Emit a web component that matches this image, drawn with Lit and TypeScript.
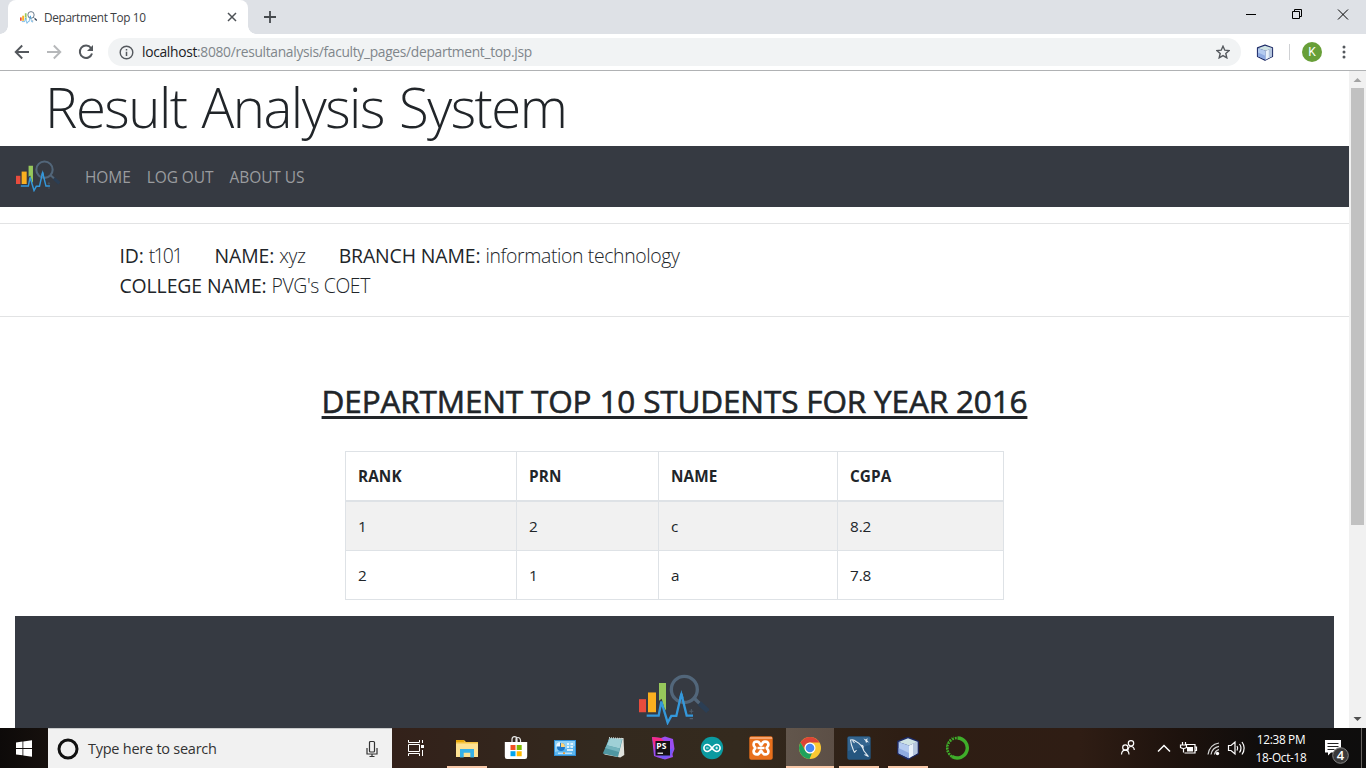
import { LitElement, html, css, svg } from "lit";
import { customElement } from "lit/decorators.js";

const logo = (cls: string) => html`<svg class=${cls} viewBox="57 42 210 152" preserveAspectRatio="none">
  <rect x="57" y="117" width="21" height="39" fill="#e84c3d"/>
  <rect x="84" y="97" width="24" height="59" fill="#fbb01f"/>
  <path d="M117 69h21v82l-5-8-8-27-8 6z" fill="#97c85b"/>
  <circle cx="193" cy="88" r="39" fill="none" stroke="#52667a" stroke-width="10"/>
  <path d="M221 113l18 17" stroke="#52667a" stroke-width="10"/>
  <path d="M238 129l26 24" stroke="#2b3e54" stroke-width="15"/>
  <path d="M80 166h36l8-42 19 63 11-20h15l15-66 16 65h19" fill="none" stroke="#3498db" stroke-width="7"/>
  <path d="M184 90l-6 24h13z" fill="#3498db"/>
  <path d="M214 146v14M208 153h12M209 175h10" stroke="#50606f" stroke-width="3"/>
</svg>`;

const cube = svg`<path d="M12 1.500l10 4v12l-10 5.500-10-5.500v-12z" fill="#1d2a66" stroke="#1d2a66" stroke-width="1.600" stroke-linejoin="round"/>
  <path d="M12 2.300l9.400 3.500-8.400 3.800-10.400-3.600z" fill="#cfe3e4"/>
  <path d="M2.600 6l10.400 3.600v12.600l-10.400-5z" fill="#b4cbf0"/>
  <path d="M2.600 12l10.400 5v5.200l-10.400-5z" fill="#8fabe2"/>
  <path d="M13 9.600l8.400-3.800v11.400l-8.400 5z" fill="#eaf2fa"/>
  <path d="M17 7.800l4.400-2v11.400l-4.400 2.600z" fill="#b5c6de"/>`;

const apps = [
  { name: "explorer", open: true, art: svg`<path d="M1 4h8l2 2h12v15H1z" fill="#f5c342"/><path d="M1 4h8v2H1z" fill="#e8a80c"/><path d="M1 7.500h22V21H1z" fill="#fde293"/><path d="M5 13h14v8.500h-3.700v-4.700H8.700v4.700H5z" fill="#35b1e8"/>` },
  { name: "store", art: svg`<path d="M8 6V3.500Q8 .7 10.500.7T13 3.500V6M12 6V3.500Q12 1.500 14 1.500T16.500 4V6" fill="none" stroke="#e8e8e8" stroke-width="1.200"/><path d="M.8 6h22.400v14.500Q23.200 23 21 23H3Q.8 23 .8 20.500z" fill="#fff"/><path d="M6.500 9h5v5h-5z" fill="#f25022"/><path d="M12.700 9h5v5h-5z" fill="#7fba00"/><path d="M6.500 15.200h5v5h-5z" fill="#00a4ef"/><path d="M12.700 15.200h5v5h-5z" fill="#ffb900"/>` },
  { name: "control", art: svg`<rect x="1.500" y="4.500" width="21" height="15" fill="#5bb5ee" stroke="#2f8fd6"/><path d="M2 5h20v5L2 16z" fill="#8dd0f7"/><circle cx="8" cy="11" r="4" fill="#1e78c8"/><path d="M8 11V7a4 4 0 0 1 4 4z" fill="#ffd479"/><path d="M7 10.500V6.300a4 4 0 0 0-3.800 4.200z" fill="#eaf6ff"/><path d="M14 8h2m1.500 0H20M14 11h2m1.500 0H20M14 14h6" stroke="#fff" stroke-width="1.400"/><path d="M5 17.200h14" stroke="#e8f6ff"/><path d="M10 17.200h2" stroke="#e69b3c" stroke-width="1.800"/>` },
  { name: "notepad", art: svg`<path d="M7 2.500L21.500 2 22.300 19l-4 2.500-16-3z" fill="#dfe2dc"/><path d="M7.500 2L20.500 3l-4.500 18L.8 17.500z" fill="#4f97a2"/><path d="M7.800 2.300L20 3.300l-2.300 9.200L4.700 9.300z" fill="#9fd0d6"/><path d="M4.700 9.300l13 3.200-.8 3.500L3.200 12z" fill="#74b4bd"/><path d="M7 1.800l14 .9" stroke="#c8d2d2" stroke-width="1.500" stroke-dasharray="1 1"/>` },
  { name: "phpstorm", art: svg`<path d="M1 1l9 1 4-1.500L22 3l1.500 10-2 5 .5 3-8 2.500-7-2L3 20z" fill="#9a4df0"/><path d="M1 1l9 1 3 3-8 1-1 9z" fill="#f62a86"/><path d="M22 12l-2 8-8 3-4-4z" fill="#6f5cf6"/><rect x="4.500" y="5" width="14.500" height="14.500" fill="#151116"/><text class="ps" x="5.300" y="13">PS</text><path d="M6.500 17.200h5.500" stroke="#fff" stroke-width="1.200"/>` },
  { name: "arduino", art: svg`<circle cx="12" cy="12" r="11.200" fill="#0b9aa0"/><path d="M12 12c-1.800-2.400-3-3.500-4.700-3.500a3.400 3.500 0 0 0 0 7c1.700 0 2.900-1.100 4.700-3.500s3-3.500 4.700-3.500a3.400 3.500 0 0 1 0 7c-1.700 0-2.900-1.100-4.700-3.500z" fill="none" stroke="#fff" stroke-width="1.600"/><path d="M6 12h2.600M15.400 12H18M16.700 10.700v2.600" stroke="#fff" stroke-width=".9"/>` },
  { name: "xampp", art: svg`<rect x=".3" y=".3" width="23.400" height="23.400" rx="2" fill="#e8701c"/><path d="M1 1h22v2H1z" fill="#f5a470"/><path d="M12 9.300C11 9.300 11.200 5.600 8 5.600S4.600 7 4.600 8.700 6.300 11 6.300 12 4.600 13.600 4.600 15.300 5 18.400 8 18.400 11 14.700 12 14.700 12.800 18.400 16 18.400s3.400-1.400 3.400-3.100S17.700 13 17.700 12s1.700-1.600 1.700-3.300S19 5.600 16 5.600 13 9.300 12 9.300z" fill="none" stroke="#fff" stroke-width="2.700"/><path d="M8.500 12h7" stroke="#fff" stroke-width="2.400"/>` },
  { name: "chrome", open: true, active: true, art: svg`<circle cx="12" cy="12" r="11" fill="#fbc933"/><path d="M2.500 6.500A11 11 0 0 1 21.500 6.500H12A5.500 5.500 0 0 0 7 14.500z" fill="#dc4437"/><path d="M2.500 6.500L7.300 14.700A5.500 5.500 0 0 0 14 17L11.500 23A11 11 0 0 1 2.500 6.500z" fill="#1fa15d"/><circle cx="12" cy="12" r="5.500" fill="#fff"/><circle cx="12" cy="12" r="4.300" fill="#4787f3"/>` },
  { name: "workbench", open: true, art: svg`<rect x=".3" y=".3" width="23.400" height="23.400" rx="2" fill="#25567f"/><path d="M1 1h22v8L1 15z" fill="#34658f"/><path d="M7.500 16.500C5.500 13 5.500 11 4.500 9L3.500 4c2-.6 4 0 5.500 1.500 4 2 6.500 5 8 9.500l4.500 5.500-4-2M5.500 4.500l2 2.500M7.500 16.500l2-2.500M14 9.500c2-.5 2.500 1 2 2.500" fill="none" stroke="#e6edf2" stroke-width="1.100"/><path d="M16.500 2.500l2.500 1L20.500 2l-.3 2.500L22 6.500l-2-.5-1 1-.5-2z" fill="#e6edf2"/>` },
  { name: "netbeans", open: true, art: cube },
  { name: "anaconda", art: svg`<path d="M12.500 2A10 10 0 1 1 7 20.500" fill="none" stroke="#3fae2a" stroke-width="3.400"/><path d="M7 20.500A10 10 0 0 1 12.500 2" fill="none" stroke="#3fae2a" stroke-width="2.600" stroke-dasharray="1.800 1.100"/><path d="M5.500 20A11.300 11.300 0 0 1 9 1" fill="none" stroke="#3fae2a" stroke-width="1.200" stroke-dasharray="1 1.500"/>` },
];

@customElement("browser-chrome")
class BrowserChrome extends LitElement {
  static styles = css`
    :host { display: block; height: 71px; box-sizing: border-box; border-bottom: 1px solid #b0b2b4; background: #fff; color: #3c4043; }
    svg { display: block; flex: none; }
    .strip { height: 34px; background: #dee1e6; display: flex; align-items: flex-start; }
    .tab { margin-left: 8px; width: 240px; height: 34px; box-sizing: border-box; padding: 0 11px 0 12px; background: #fff; border-radius: 8px 8px 0 0; display: flex; align-items: center; position: relative; }
    .tab::before, .tab::after { content: ""; position: absolute; bottom: 0; width: 8px; height: 8px; }
    .tab::before { left: -8px; background: radial-gradient(circle at 0 0, #dee1e6 7.500px, #fff 8px); }
    .tab::after { right: -8px; background: radial-gradient(circle at 100% 0, #dee1e6 7.500px, #fff 8px); }
    .fav { width: 17px; height: 13px; }
    .tabname { margin-left: 7px; flex: 1; font-size: 11.800px; letter-spacing: -0.340px; line-height: 16px; white-space: nowrap; }
    .plus { margin: 11px 0 0 16px; }
    .win { margin-left: auto; display: flex; align-items: center; height: 28px; }
    .bar { height: 36px; display: flex; align-items: center; }
    .back { margin-left: 14px; }
    .fwd { margin-left: 16px; }
    .reload { margin-left: 16px; }
    .omni { margin-left: 14px; width: 1133px; height: 28px; border-radius: 14px; background: #f1f3f4; box-sizing: border-box; padding: 0 11px 0 11px; display: flex; align-items: center; }
    .url { margin-left: 8px; flex: 1; font-size: 13.800px; letter-spacing: -0.310px; line-height: 20px; color: #80868b; white-space: nowrap; }
    .host { color: #202124; }
    .cube { margin-left: 15px; }
    .sep { width: 1px; height: 16px; background: #cfd1d4; margin-left: 15px; }
    .avatar { margin-left: 12px; width: 20px; height: 20px; border-radius: 50%; background: #689f38; color: #fff; font-size: 12px; line-height: 20px; text-align: center; font-family: Roboto, sans-serif; }
    .dots { margin-left: 20px; }
  `;
  render() {
    return html`
      <div class="strip">
        <div class="tab">
          ${logo("fav")}
          <span class="tabname">Department Top 10</span>
          <svg width="10" height="10" viewBox="0 0 10 10"><path d="M1 1l8 8M9 1l-8 8" stroke="#4d5156" stroke-width="1.500"/></svg>
        </div>
        <svg class="plus" width="12" height="12" viewBox="0 0 12 12"><path d="M6 0v12M0 6h12" stroke="#45494d" stroke-width="1.800"/></svg>
        <div class="win">
          <svg width="120" height="28" viewBox="0 0 120 28" fill="none" stroke="#000"><path d="M0 14.500h10M46.500 11.500h7v7h-7zM48.500 11.500v-2h7v7h-2M92 9.500l10 10M102 9.500l-10 10"/></svg>
        </div>
      </div>
      <div class="bar">
        <svg class="back" width="16" height="16" viewBox="0 0 16 16" fill="none" stroke="#54585d" stroke-width="1.900"><path d="M15 8H2M8.200 1.500L1.700 8l6.500 6.500"/></svg>
        <svg class="fwd" width="16" height="16" viewBox="0 0 16 16" fill="none" stroke="#b6b8ba" stroke-width="1.900"><path d="M1 8h13M7.800 1.500L14.300 8l-6.500 6.500"/></svg>
        <svg class="reload" width="16" height="16" viewBox="0 0 16 16"><path d="M13 4A6.200 6.200 0 1 0 14 9.500" fill="none" stroke="#54585d" stroke-width="2"/><path d="M15 1v6H9z" fill="#54585d"/></svg>
        <div class="omni">
          <svg width="15" height="15" viewBox="0 0 15 15"><circle cx="7.500" cy="7.500" r="6.300" fill="none" stroke="#54585d" stroke-width="1.400"/><path d="M7.500 6.700V11M7.500 4v1.500" stroke="#54585d" stroke-width="1.500"/></svg>
          <span class="url"><span class="host">localhost</span>:8080/resultanalysis/faculty_pages/department_top.jsp</span>
          <svg width="14" height="14" viewBox="0 0 14 14"><path d="M7 1.200l1.800 4 4.300.4-3.300 2.900 1 4.300L7 10.600l-3.800 2.200 1-4.300L.9 5.600l4.300-.4z" fill="none" stroke="#54585d" stroke-width="1.400"/></svg>
        </div>
        <svg class="cube" width="18" height="17" viewBox="0 0 24 24" preserveAspectRatio="none">${cube}</svg>
        <div class="sep"></div>
        <div class="avatar">K</div>
        <svg class="dots" width="4" height="14" viewBox="0 0 4 14" fill="#54585d"><circle cx="2" cy="2" r="1.500"/><circle cx="2" cy="7" r="1.500"/><circle cx="2" cy="12" r="1.500"/></svg>
      </div>`;
  }
}

@customElement("result-page")
class ResultPage extends LitElement {
  static styles = css`
    :host { display: block; width: 1349px; height: 657px; overflow: hidden; background: #fff; color: #212529; }
    svg { display: block; flex: none; }
    .title { margin: 0; height: 75px; box-sizing: border-box; padding-left: 45px; font-weight: 300; font-size: 54.500px; letter-spacing: -1.500px; word-spacing: 2.500px; line-height: 73px; white-space: nowrap; }
    .nav { height: 61px; background: #363a42; display: flex; align-items: center; padding-left: 16px; color: #9a9c9f; font-size: 15.500px; letter-spacing: -0.080px; }
    .navlogo { width: 44px; height: 32px; margin: 0 25px 2px 0; }
    .link { margin-right: 16px; line-height: 24px; white-space: nowrap; }
    .info { margin-top: 16px; height: 94px; box-sizing: border-box; border: solid #e2e3e4; border-width: 1px 0; padding: 17px 0 0 119.500px; font-size: 19.400px; line-height: 30px; letter-spacing: -0.100px; }
    .line { display: flex; gap: 33px; white-space: nowrap; }
    .value { font-weight: 300; letter-spacing: -0.360px; }
    .code { letter-spacing: -1.700px; }
    .heading { margin: 65px 0 0; text-align: center; font-weight: 500; -webkit-text-stroke: 0.600px #212529; font-size: 31.500px; letter-spacing: -0.150px; line-height: 38px; text-decoration: underline; text-decoration-thickness: 3px; text-underline-offset: 3px; text-decoration-skip-ink: none; white-space: nowrap; }
    .table { margin: 31px 0 0 345px; width: 659px; box-sizing: border-box; border: solid #dee2e6; border-width: 1px 0 0 1px; display: grid; grid-template-columns: 171px 142px 179px 166px; grid-template-rows: 50px 49px 49px; font-size: 15.300px; letter-spacing: -0.100px; }
    .cell { border: solid #dee2e6; border-width: 0 1px 1px 0; padding: 0 12px; display: flex; align-items: center; }
    .head { border-bottom-width: 2px; font-weight: 700; letter-spacing: 0.100px; }
    .odd { background: #f1f1f1; }
    .footer { margin: 16px 15px 0; height: 300px; background: #363a42; padding-top: 58px; box-sizing: border-box; display: flex; justify-content: center; }
    .footlogo { width: 70px; height: 51px; margin-right: 1px; }
  `;
  private rows = [["1", "2", "c", "8.2"], ["2", "1", "a", "7.8"]];
  render() {
    return html`
      <h1 class="title">Result Analysis System</h1>
      <nav class="nav">${logo("navlogo")}${["HOME", "LOG OUT", "ABOUT US"].map((t) => html`<span class="link">${t}</span>`)}</nav>
      <section class="info">
        <div class="line">
          <span>ID: <span class="value code">t101</span></span>
          <span>NAME: <span class="value">xyz</span></span>
          <span>BRANCH NAME: <span class="value">information technology</span></span>
        </div>
        <div class="line"><span>COLLEGE NAME: <span class="value">PVG's COET</span></span></div>
      </section>
      <h2 class="heading">DEPARTMENT TOP 10 STUDENTS FOR YEAR 2016</h2>
      <div class="table">
        ${["RANK", "PRN", "NAME", "CGPA"].map((t) => html`<div class="cell head">${t}</div>`)}
        ${this.rows.map((r, i) => r.map((c) => html`<div class="cell ${i % 2 ? "" : "odd"}">${c}</div>`))}
      </div>
      <footer class="footer">${logo("footlogo")}</footer>`;
  }
}

@customElement("task-bar")
class TaskBar extends LitElement {
  static styles = css`
    :host { display: flex; height: 40px; color: #fff; background: linear-gradient(90deg, #0d0a09 0, #16100d 48px, #33211a 392px, #33291e 600px, #342a1e 740px, #2e1e14 900px, #2f1d14 1080px, #1d120d 1180px, #100d0c 1260px, #0e0d0d); }
    svg { display: block; flex: none; }
    .start { width: 48px; display: grid; place-items: center; }
    .search { width: 344px; box-sizing: border-box; background: #f1f1f1; border-top: 1px solid #c9cacb; display: flex; align-items: center; padding: 0 13px 0 9px; color: #333; }
    .ask { margin-left: 9px; flex: 1; font-size: 14.500px; letter-spacing: -0.250px; line-height: 20px; }
    .view { width: 48px; margin-right: 3px; display: grid; place-items: center; }
    .apps { display: flex; gap: 1px; }
    .app { width: 48px; height: 40px; box-sizing: border-box; display: flex; justify-content: center; align-items: flex-start; padding-top: 8px; position: relative; }
    .active { background: linear-gradient(90deg, #62564c, #5c4f46); }
    .open::after { content: ""; position: absolute; left: 4px; right: 4px; bottom: 0; height: 2px; background: #f8c8a8; }
    .active::after { left: 0; right: 0; }
    .ps { font: 700 8.500px "Open Sans", sans-serif; fill: #fff; }
    .tray { margin-left: auto; display: flex; }
    .clock { width: 66px; text-align: center; font-size: 11.800px; letter-spacing: -0.300px; line-height: 18px; padding-top: 2px; white-space: nowrap; }
    .note { margin-left: 8px; }
    .num { font: 600 13px "Open Sans", sans-serif; fill: #fff; }
    .edge { width: 4px; border-left: 1px solid #66625f; }
  `;
  render() {
    return html`
      <div class="start"><svg width="16" height="17" viewBox="0 0 16 17" fill="#fff"><path d="M0 2.500l6.500-.9v6.500H0zM7.300 1.500L16 .3v7.800H7.300zM0 8.900h6.500v6.400L0 14.400zM7.300 8.900H16v7.800l-8.700-1.200z"/></svg></div>
      <div class="search">
        <svg width="22" height="22" viewBox="0 0 22 22"><circle cx="11" cy="11" r="9" fill="none" stroke="#111" stroke-width="3"/></svg>
        <span class="ask">Type here to search</span>
        <svg width="14" height="18" viewBox="0 0 14 18" fill="none" stroke="#333" stroke-width="1.200"><rect x="4.500" y="1.500" width="5" height="10.500" rx="1"/><path d="M2 8v6h10V8M7 14v3M4.500 16.500h5"/></svg>
      </div>
      <div class="view"><svg width="18" height="16" viewBox="0 0 18 16" fill="none" stroke="#fff"><path d="M1.500 0v2.500h11V0M1.500 16v-2.500h11V16M1.500 4.500h11v7h-11zM15.500 0v3M15.500 10v6"/><path d="M14 5h3v3h-3z" fill="#fff" stroke="none"/></svg></div>
      <div class="apps">
        ${apps.map((a) => html`<div class="app ${a.open ? "open" : ""} ${a.active ? "active" : ""}"><svg width="24" height="24" viewBox="0 0 24 24">${a.art}</svg></div>`)}
      </div>
      <div class="tray">
        <svg width="128" height="40" viewBox="1120 728 128 40" fill="none" stroke="#fff" stroke-width="1.200">
          <circle cx="1131" cy="743.300" r="2.700"/><path d="M1128 750.500q0-4 3-4t3.300 3.500"/><circle cx="1125.300" cy="747.500" r="2.600"/><path d="M1121.500 754.500q.3-4.300 3.800-4.300t3.700 4.300"/>
          <path d="M1158 751.500l6-6 6 6" stroke-width="1.500"/>
          <path d="M1186 744.500h9v8.500h-10.500M1195 747h1.500v3.500h-1.500M1182.500 742v3M1185.500 742v3M1180.500 745h6v2.500q-3 2-6 0zM1183.500 749v3.500"/><rect x="1187" y="747" width="6" height="4.500" fill="#fff" stroke="none"/>
          <path d="M1208 754.500q1.500-10 11-11.500M1211 754.500q1.200-7 8-8.200M1214.500 754.500q.8-4 4.500-4.800" stroke="#d8d8d8"/><circle cx="1217.500" cy="753.500" r="1.700" fill="#fff" stroke="none"/>
          <path d="M1228.500 745.500h2.500l4-3.500v12l-4-3.500h-2.500zM1237 746q1.500 2 0 4.500M1239.500 744q3 4 0 8.500M1242 742q4.300 6 0 12.500"/>
        </svg>
        <div class="clock"><div>12:38 PM</div><div>18-Oct-18</div></div>
        <svg class="note" width="39" height="40" viewBox="1322 728 39 40"><path d="M1325 740h16v12.500h-10l-3 3v-3h-3z" fill="#fff"/><path d="M1327.500 743.500h11M1327.500 746.500h11M1327.500 749.500h7" stroke="#222"/><circle cx="1340.500" cy="755.500" r="7.800" fill="#3a3939" stroke="#858585"/><text class="num" x="1336.700" y="760.300">4</text></svg>
        <div class="edge"></div>
      </div>`;
  }
}

@customElement("app-root")
class AppRoot extends LitElement {
  static styles = css`
    :host { display: block; width: 1366px; height: 768px; overflow: hidden; font-family: "Open Sans", "Noto Sans", sans-serif; }
    .body { display: flex; }
    .scroll { width: 17px; height: 657px; background: #f1f1f1; display: flex; flex-direction: column; align-items: center; }
    .arrow { display: block; width: 17px; height: 17px; flex: none; }
    .track { flex: 1; width: 13px; }
    .thumb { height: 437px; background: #c1c1c1; }
  `;
  render() {
    return html`
      <browser-chrome></browser-chrome>
      <div class="body">
        <result-page></result-page>
        <div class="scroll">
          <svg class="arrow" viewBox="0 0 17 17"><path d="M4.500 11h8L8.500 7z" fill="#a3a3a3"/></svg>
          <div class="track"><div class="thumb"></div></div>
          <svg class="arrow" viewBox="0 0 17 17"><path d="M4.500 6h8L8.500 10z" fill="#505050"/></svg>
        </div>
      </div>
      <task-bar></task-bar>`;
  }
}
